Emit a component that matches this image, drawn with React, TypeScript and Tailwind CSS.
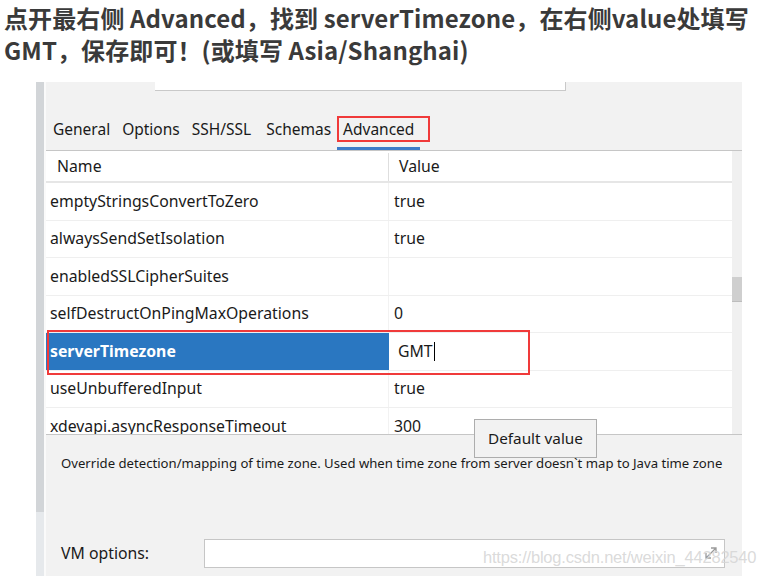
import React from 'react';

const rows = [
  { name: 'emptyStringsConvertToZero', value: 'true' },
  { name: 'alwaysSendSetIsolation', value: 'true' },
  { name: 'enabledSSLCipherSuites', value: '' },
  { name: 'selfDestructOnPingMaxOperations', value: '0' },
  { name: 'serverTimezone', value: 'GMT', selected: true },
  { name: 'useUnbufferedInput', value: 'true' },
  { name: 'xdevapi.asyncResponseTimeout', value: '300' },
];

const tabs = [
  { label: 'General', pr: 'pr-[6px]' },
  { label: 'Options', pr: 'pr-[6px]' },
  { label: 'SSH/SSL', pr: 'pr-[9px]' },
  { label: 'Schemas', pr: 'pr-[6px]' },
  { label: 'Advanced', pr: 'pr-[6px]' },
];

export default function App() {
  return (
    <div className="relative w-[765px] h-[576px] overflow-hidden bg-white font-['Noto_Sans',sans-serif] text-[#1a1a1a]">
      {/* caption */}
      <div className="h-[82px] pl-[4px] pt-[2px] text-[24px] leading-[32px] font-bold text-[#3a3a3a] font-['Noto_Sans_CJK_SC',sans-serif] tracking-[0.1px] whitespace-nowrap">
        点开最右侧 Advanced，找到 serverTimezone，在右侧value处填写
        <br />
        GMT，保存即可！(或填写 Asia/Shanghai)
      </div>

      {/* dialog */}
      <div className="ml-[36px] w-[706px] h-[494px] flex">
        <div className="w-[8px] flex flex-col">
          <div className="h-[430px] bg-[#d2d5d8]" />
          <div className="flex-1 bg-[#e6e9ec]" />
        </div>
        <div className="w-[2px] bg-[#fafafa]" />

        <div className="relative flex-1 flex flex-col bg-[#f2f2f2]">
          {/* top input remains */}
          <div className="ml-[109px] w-[411px] h-[9px] bg-white border-r border-b border-[#c9c9c9] shrink-0" />

          {/* tabs */}
          <div className="h-[60px] shrink-0 flex items-end pl-[1px] border-b border-[#c6c6c6]">
            {tabs.map((t) => {
              const active = t.label === 'Advanced';
              return (
                <div
                  key={t.label}
                  className={
                    active
                      ? 'relative h-[36px] pl-[6px] pr-[6px] flex items-start pt-[5px] text-[15.5px] leading-[21px] border-b-[3px] border-[#3d7cc9]'
                      : `h-[36px] pl-[6px] ${t.pr} flex items-start pt-[5px] text-[15.5px] leading-[21px] border-b-[3px] border-transparent`
                  }
                >
                  {t.label}
                  {active && (
                    <div className="absolute left-0 top-[2px] w-[93px] h-[26px] border-2 border-[#f03a3a]" />
                  )}
                </div>
              );
            })}
          </div>

          {/* table */}
          <div className="h-[283px] shrink-0 flex overflow-hidden">
            <div className="flex-1 bg-white flex flex-col">
              <div className="h-[32px] pt-[2px] flex items-center bg-white border-b-2 border-[#e6e6e6] text-[15.8px] shrink-0">
                <div className="w-[343px] h-full flex items-center pl-[11px] border-r border-[#dedede]">Name</div>
                <div className="pl-[10px]">Value</div>
              </div>
              {rows.map((r) => (
                <div key={r.name} className="h-[37.5px] shrink-0 flex border-b border-[#efefef] text-[15.8px]">
                  {r.selected ? (
                    <>
                      <div className="w-[343px] flex items-center pl-[4px] pt-[1px] bg-[#2a77c1] text-white font-bold">
                        {r.name}
                      </div>
                      <div className="flex-1 flex items-center pl-[9px] pt-[1px] bg-white">
                        {r.value}
                        <span className="ml-[1px] w-[1.5px] h-[19px] bg-black" />
                      </div>
                    </>
                  ) : (
                    <>
                      <div className="w-[343px] flex items-center pl-[4px] pt-[1px] border-r border-[#f2f2f2]">{r.name}</div>
                      <div className="flex-1 flex items-center pl-[5px] pt-[1px]">{r.value}</div>
                    </>
                  )}
                </div>
              ))}
            </div>
            <div className="w-[10px] bg-[#f0f0f0] flex flex-col">
              <div className="h-[126px]" />
              <div className="h-[25px] bg-[#cfcfcf] border-b border-[#bdbdbd]" />
            </div>
          </div>

          {/* red highlight over selected row */}
          <div className="absolute left-[1px] top-[248px] w-[483px] h-[45px] border-2 border-[#f03a3a] pointer-events-none" />

          {/* bottom description */}
          <div className="flex-1 flex flex-col border-t border-[#c6c6c6] pl-[15px]">
            <div className="pt-[19px] text-[13.15px] leading-[18px]">
              Override detection/mapping of time zone. Used when time zone from server doesn`t map to Java time zone
            </div>
            <div className="mt-[67px] flex items-center">
              <div className="w-[143px] text-[15.8px]">VM options:</div>
              <div className="relative w-[521px] h-[29px] bg-white border border-[#c6c6c6]">
                <svg className="absolute right-[4px] top-[4px]" width="18" height="18" viewBox="0 0 18 18">
                  <path d="M4 14 L14 4 M9 4 H14 V9 M4 9 V14 H9" stroke="#9a9a9a" strokeWidth="1.3" fill="none" />
                </svg>
              </div>
            </div>
          </div>

          {/* tooltip */}
          <div className="absolute left-[428px] top-[337px] w-[123px] h-[39px] flex items-center justify-center bg-[#f2f2f2] border border-[#adadad] text-[15.3px]">
            Default value
          </div>
        </div>
      </div>

      {/* watermark */}
      <div className="absolute left-[483px] top-[545px] text-[16.5px] font-['Liberation_Sans',sans-serif] text-[#d6d6d6]/90 tracking-[-0.2px]">
        https://blog.csdn.net/weixin_44282540
      </div>
    </div>
  );
}
